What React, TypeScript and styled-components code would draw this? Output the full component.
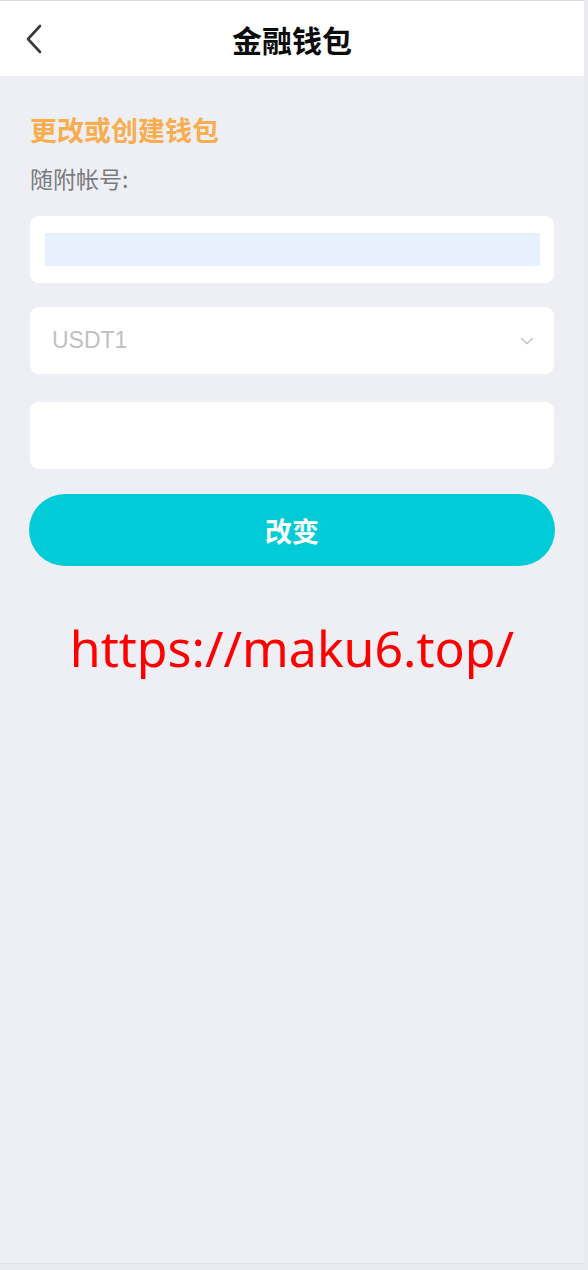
import * as React from 'react';
import styled, { createGlobalStyle } from 'styled-components';

const GlobalStyle = createGlobalStyle`
  html, body {
    margin: 0;
    padding: 0;
    background: #e9eaf0;
  }
  body {
    font-family: "Liberation Sans", "Noto Sans CJK SC", sans-serif;
  }
`;

const Page = styled.div`
  width: 584px;
  min-height: 1264px;
  background: #eeeff4;
  border-top: 1px solid #d9dadf;
  border-bottom: 1px solid #dfe0e5;
  box-sizing: border-box;
`;

const Header = styled.header`
  height: 75px;
  background: #ffffff;
  display: flex;
  align-items: center;
  justify-content: center;
  position: relative;
`;

const BackButton = styled.button`
  position: absolute;
  left: 19px;
  top: 50%;
  transform: translateY(-50%);
  border: none;
  background: transparent;
  padding: 4px;
  display: flex;
  cursor: pointer;
`;

const Title = styled.h1`
  margin: 0;
  font-size: 30px;
  font-weight: 700;
  color: #0c0c0c;
  font-family: "Noto Sans CJK SC", sans-serif;
`;

const Body = styled.main`
  padding: 36px 30px 0 30px;
  display: flex;
  flex-direction: column;
`;

const SectionTitle = styled.h2`
  margin: 0;
  font-size: 27px;
  font-weight: 700;
  color: #f8ad4f;
  font-family: "Noto Sans CJK SC", sans-serif;
  line-height: 36px;
`;

const Label = styled.div`
  margin-top: 14px;
  font-size: 23px;
  color: #7a7a7e;
  font-family: "Noto Sans CJK SC", sans-serif;
  line-height: 32px;
`;

const Card = styled.div<{ $gap: number }>`
  margin-top: ${(p) => p.$gap}px;
  height: 67px;
  background: #ffffff;
  border-radius: 9px;
  display: flex;
  align-items: center;
  padding: 0 15px;
  box-sizing: border-box;
`;

const FilledInput = styled.input`
  flex: 1;
  height: 33px;
  border: none;
  outline: none;
  background: #e8f0fe;
  padding: 0;
  margin-right: -1px;
`;

const SelectText = styled.span`
  flex: 1;
  padding-left: 7px;
  font-size: 23px;
  color: #c0c0c4;
`;

const PlainInput = styled.input`
  flex: 1;
  height: 33px;
  border: none;
  outline: none;
  background: transparent;
`;

const ActionButton = styled.button`
  margin: 25px -1px 0 -1px;
  height: 72px;
  border: none;
  border-radius: 36px;
  background: #01cbd6;
  color: #ffffff;
  font-size: 27px;
  font-weight: 700;
  font-family: "Noto Sans CJK SC", sans-serif;
  cursor: pointer;
`;

const Watermark = styled.div`
  margin-top: 47px;
  text-align: center;
  font-family: "Noto Sans", sans-serif;
  font-size: 50px;
  color: #ff0000;
  line-height: 70px;
`;

const App = () => {
  return (
    <>
      <GlobalStyle />
      <Page>
        <Header>
          <BackButton aria-label="back">
            <svg width="22" height="32" viewBox="0 0 22 32" fill="none">
              <path d="M17 3 L5 16 L17 29" stroke="#3a3a3a" strokeWidth="2.6" strokeLinecap="round" strokeLinejoin="round" />
            </svg>
          </BackButton>
          <Title>金融钱包</Title>
        </Header>
        <Body>
          <SectionTitle>更改或创建钱包</SectionTitle>
          <Label>随附帐号:</Label>
          <Card $gap={22}>
            <FilledInput />
          </Card>
          <Card $gap={24}>
            <SelectText>USDT1</SelectText>
            <svg width="14" height="10" viewBox="0 0 14 10" fill="none" style={{ marginRight: 5 }}>
              <path d="M1.5 2.5 L7 7.5 L12.5 2.5" stroke="#c4c4c8" strokeWidth="1.5" strokeLinecap="round" strokeLinejoin="round" />
            </svg>
          </Card>
          <Card $gap={28}>
            <PlainInput />
          </Card>
          <ActionButton>改变</ActionButton>
          <Watermark>https://maku6.top/</Watermark>
        </Body>
      </Page>
    </>
  );
};

export default App;
